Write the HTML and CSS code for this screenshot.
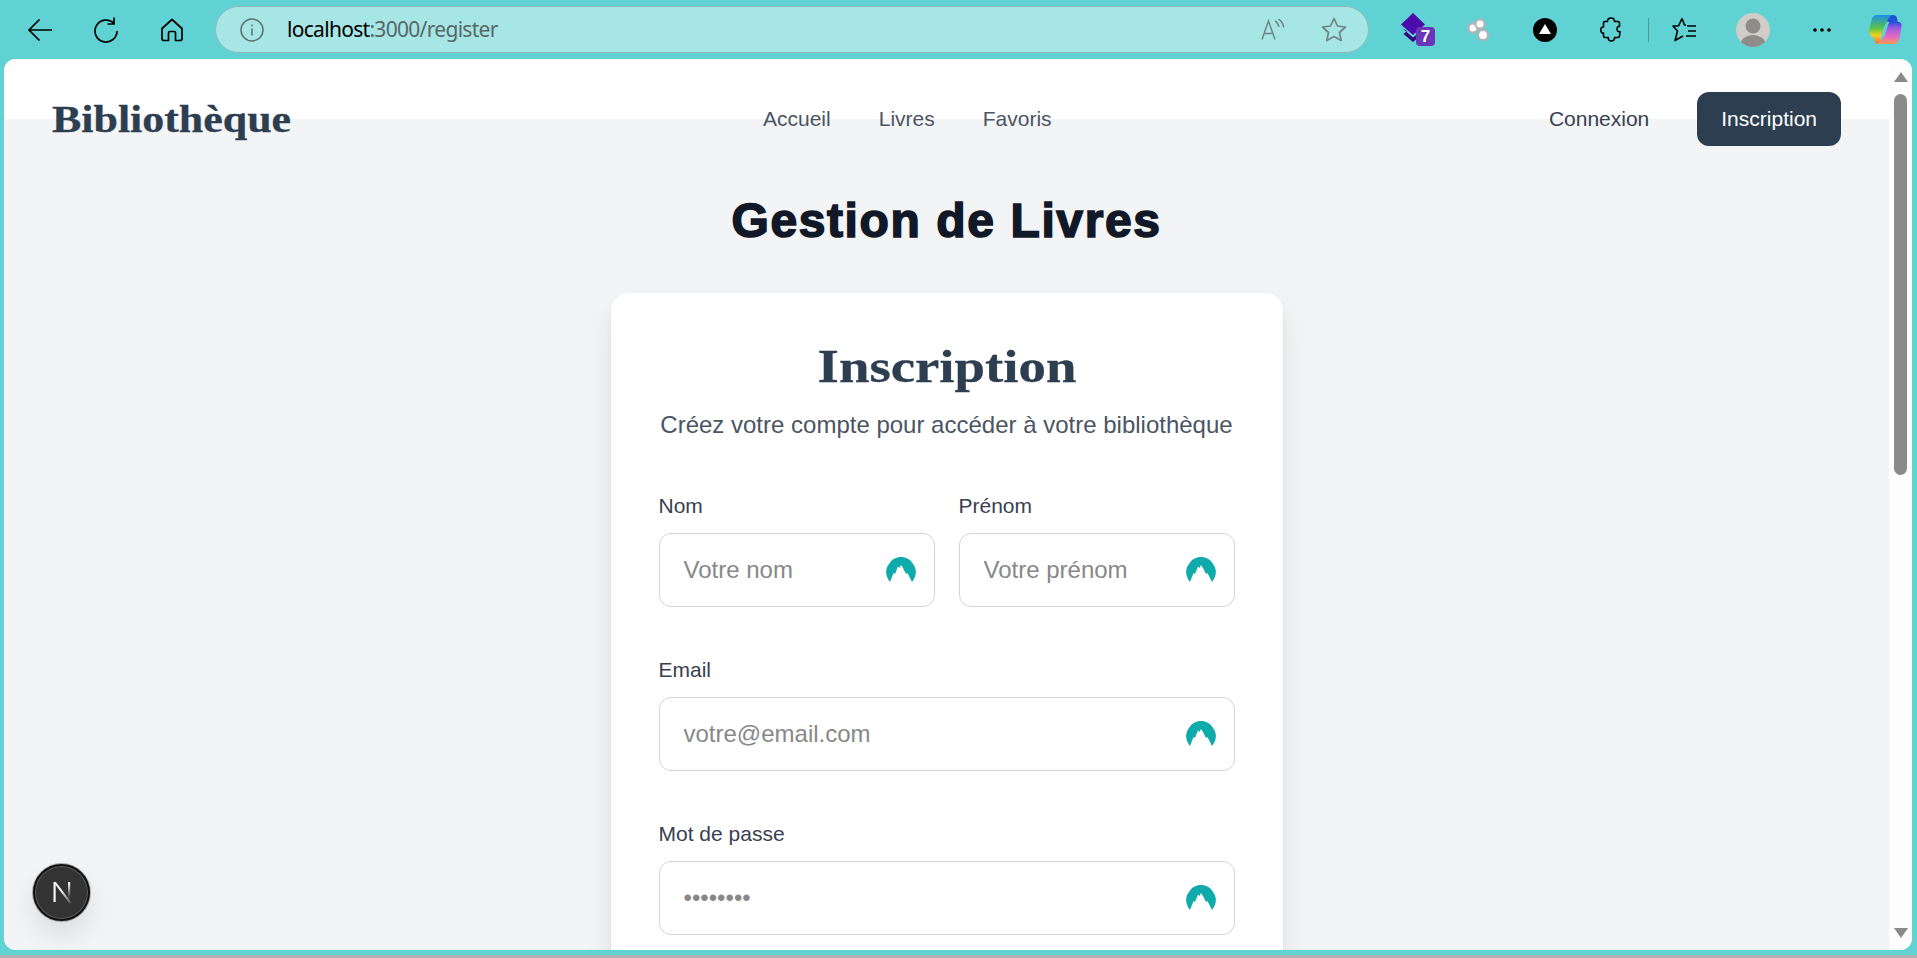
FILE: index.html
```html
<!DOCTYPE html>
<html lang="fr">
<head>
<meta charset="utf-8">
<title>Bibliothèque</title>
<link rel="stylesheet" href="styles.css">
</head>
<body>
<svg class="defs" width="0" height="0" aria-hidden="true">
  <symbol id="peak" viewBox="0 0 30 25">
    <path d="M4 25C-1 19-1 12 3 7 6 2 10 0 15 0s9 2 12 7c4 5 4 12-1 18l-4.500-9-1.500 1-3-6-2-3-1.500 3-1.500-1.500-3 7.500-1.500-1Z" fill="#0fabaa"/>
  </symbol>
</svg>
<header class="toolbar">
  <button class="tb-btn" aria-label="Retour"><svg width="26" height="24" viewBox="0 0 26 24" fill="none" stroke="#000" stroke-width="1.700"><path d="M25 12H2M12.500 1.500 2 12l10.500 10.500"/></svg></button>
  <button class="tb-btn" aria-label="Actualiser"><svg width="26" height="27" viewBox="0 0 26 27" fill="none" stroke="#000" stroke-width="1.700"><path d="M21 7.500A11 11 0 1 0 24 15M21 1.500v6.500h-6.500"/></svg></button>
  <button class="tb-btn" aria-label="Accueil"><svg width="24" height="24" viewBox="0 0 24 24" fill="none" stroke="#000" stroke-width="1.700" stroke-linejoin="round"><path d="M12 1.500 22 10.500V20.500A2 2 0 0 1 20 22.500H15.500V15A1.500 1.500 0 0 0 14 13.500H10A1.500 1.500 0 0 0 8.500 15V22.500H4A2 2 0 0 1 2 20.500V10.500Z"/></svg></button>
  <div class="addr">
    <svg class="addr-info" width="24" height="24" viewBox="0 0 24 24" fill="none" stroke="#5f7070" stroke-width="1.500"><circle cx="12" cy="12" r="11"/><path d="M12 10.500v7M12 6.500v1.800"/></svg>
    <span class="url"><span class="url-host">localhost</span>:3000/register</span>
    <svg class="addr-read" width="24" height="21" viewBox="0 0 24 21" fill="none" stroke="#6f8585" stroke-width="1.500"><path d="M1 20.500 7.500 2 14 20.500M3.200 14.500h8.600M14 2c2.200 1.200 3.500 3.500 3.800 6M17.500 0c2.800 1.800 4.800 4.800 5.200 8.500"/></svg>
    <svg class="addr-star" width="26" height="25" viewBox="0 0 26 25" fill="none" stroke="#6f8585" stroke-width="1.700" stroke-linejoin="round"><path d="M13 1.500 16.500 9l8 1-6 5.500 1.700 8-7.200-4-7.200 4 1.700-8-6-5.500 8-1Z"/></svg>
  </div>
  <svg class="ext ext-stack" width="34" height="33" viewBox="0 0 34 33">
    <path d="M1 15 12 24.500 19 19V23L12 29 2.500 21 6 18Z" fill="#34087f"/>
    <path d="M0 11.500 12 0 24 11.500 12 22Z" fill="#4a0cad"/>
    <rect x="15" y="14" width="19" height="19" rx="4" fill="#6a35b8"/>
    <text x="24.500" y="29" class="ext-count">7</text>
  </svg>
  <svg class="ext ext-dots" width="23" height="23" viewBox="0 0 23 23" fill="#fff" stroke="#b3b3b3" stroke-width="2.200"><circle cx="6" cy="10" r="4.600"/><circle cx="13" cy="6" r="4.600"/><circle cx="16" cy="17" r="5"/></svg>
  <svg class="ext ext-black" width="24" height="24" viewBox="0 0 24 24"><circle cx="12" cy="12" r="12"/><path d="M12 6 18 16H6Z" fill="#fff"/></svg>
  <svg class="ext ext-puzzle" width="22" height="25" viewBox="0 0 22 25" fill="none" stroke="#000" stroke-width="1.600" stroke-linejoin="round"><path d="M11 1c2.200 0 3.500 1.300 3.500 3.500H18c.800 0 1.500.700 1.500 1.500v3.500c-1-.300-2.500 0-2.500 2.500s1.500 3 3 2.500L19.500 19c0 .800-.700 1.500-1.500 1.500h-3.500c.300 2.500-1.500 3.500-3.200 3.500s-3.300-1-3-3.500H5c-.800 0-1.500-.700-1.500-1.500v-3C1.500 16.300.800 14.500.800 13s.700-3.300 2.700-3V6c0-.800.700-1.500 1.500-1.500h2.500C7.500 2.300 8.800 1 11 1Z"/></svg>
  <span class="tb-sep"></span>
  <svg class="ext ext-fav" width="25" height="25" viewBox="0 0 25 25" fill="none" stroke="#000" stroke-width="1.600" stroke-linejoin="round"><path d="M10 1.500 12.500 8H14M6.500 9H1l4.500 5L3 23.500l8-4.500M6.500 9 10 1.500M15 9h9M16 14h8M14 19h10"/></svg>
  <svg class="ext ext-avatar" width="34" height="34" viewBox="0 0 34 34"><defs><clipPath id="av"><circle cx="17" cy="17" r="17"/></clipPath></defs><circle cx="17" cy="17" r="17" fill="#d0cdc8"/><g clip-path="url(#av)" fill="#8e8c88"><circle cx="17" cy="13" r="7.500"/><ellipse cx="17" cy="31" rx="12.500" ry="9"/></g></svg>
  <svg class="ext ext-more" width="18" height="4" viewBox="0 0 18 4"><circle cx="2" cy="2" r="1.800"/><circle cx="9" cy="2" r="1.800"/><circle cx="16" cy="2" r="1.800"/></svg>
  <svg class="ext ext-copilot" width="33" height="31" viewBox="0 0 33 31">
    <defs>
      <linearGradient id="cl" x1="0" y1="0" x2="0" y2="1"><stop offset="0" stop-color="#1b8fe8"/><stop offset=".45" stop-color="#5cc24a"/><stop offset=".7" stop-color="#f0d21c"/><stop offset="1" stop-color="#f26a3c"/></linearGradient>
      <linearGradient id="cr" x1="0" y1="0" x2="0" y2="1"><stop offset="0" stop-color="#2450d8"/><stop offset=".3" stop-color="#a45be0"/><stop offset=".7" stop-color="#e86cc0"/><stop offset="1" stop-color="#fb9a4a"/></linearGradient>
    </defs>
    <path d="M8 1h16l-4 5c-3 3-5 6-6 10l-3 11c-.500 2-2 3-4 3L4 23C0 21-.500 18 .500 14L3 5c.600-2.500 2.500-4 5-4Z" fill="url(#cl)"/>
    <path d="M24 1c2 0 3.500 1 4 3l1 5h-8l-3-2 2-3c1-2 2-3 4-3Z" fill="#2450d8"/>
    <path d="M22 8h7c3 0 4 2 3.500 5l-2 11c-1 4-3 6-6 6H8l5-5c2-2 3-4 4-7l2-7c.500-2 1.500-3 3-3Z" fill="url(#cr)"/>
  </svg>
</header>

<div class="window">
  <div class="page">
    <nav class="nav">
      <a class="logo">Bibliothèque</a>
      <div class="nav-links">
        <a class="nav-link">Accueil</a>
        <a class="nav-link">Livres</a>
        <a class="nav-link">Favoris</a>
      </div>
      <div class="nav-actions">
        <a class="nav-action">Connexion</a>
        <a class="nav-cta">Inscription</a>
      </div>
    </nav>
    <main class="main">
      <h1 class="title">Gestion de Livres</h1>
      <section class="card">
        <h2 class="card-title">Inscription</h2>
        <p class="card-sub">Créez votre compte pour accéder à votre bibliothèque</p>
        <form class="form">
          <div class="row">
            <div class="field">
              <label class="label">Nom</label>
              <div class="control"><input class="input" type="text" placeholder="Votre nom"><svg class="peak"><use href="#peak"/></svg></div>
            </div>
            <div class="field">
              <label class="label">Prénom</label>
              <div class="control"><input class="input" type="text" placeholder="Votre prénom"><svg class="peak"><use href="#peak"/></svg></div>
            </div>
          </div>
          <div class="field">
            <label class="label">Email</label>
            <div class="control"><input class="input" type="email" placeholder="votre@email.com"><svg class="peak"><use href="#peak"/></svg></div>
          </div>
          <div class="field">
            <label class="label">Mot de passe</label>
            <div class="control"><input class="input" type="password" placeholder="••••••••"><svg class="peak"><use href="#peak"/></svg></div>
          </div>
        </form>
      </section>
    </main>
    <button class="next-badge" aria-label="Next.js">
      <svg width="30" height="30" viewBox="0 0 30 30" fill="none">
        <defs>
          <linearGradient id="nd" x1="0" y1="0" x2="1" y2="1"><stop offset=".4" stop-color="#fff"/><stop offset="1" stop-color="#fff" stop-opacity=".1"/></linearGradient>
          <linearGradient id="nr" x1="0" y1="0" x2="0" y2="1"><stop offset="0" stop-color="#fff"/><stop offset=".9" stop-color="#fff" stop-opacity=".1"/></linearGradient>
        </defs>
        <rect x="6.500" y="4" width="2.200" height="20" fill="#f2f2f2"/>
        <path d="M6.500 4 8.800 4 24.500 24.500 22.700 25.800Z" fill="url(#nd)"/>
        <rect x="21" y="4" width="2.200" height="16" fill="url(#nr)"/>
      </svg>
    </button>
  </div>
  <div class="scrollbar">
    <span class="arrow-up"></span>
    <span class="thumb"></span>
    <span class="arrow-down"></span>
  </div>
</div>
<div class="taskbar-edge"></div>
</body>
</html>
```
FILE: styles.css
```css
* { box-sizing: border-box; }
html, body { margin: 0; height: 958px; overflow: hidden; }
body {
  display: flex;
  flex-direction: column;
  background: #61d2d3;
  font-family: "Liberation Sans", Arial, sans-serif;
}
.defs { position: absolute; }

/* browser toolbar */
.toolbar {
  flex: none;
  height: 59px;
  display: flex;
  align-items: center;
  padding-left: 7px;
}
.tb-btn {
  width: 66px;
  height: 46px;
  padding: 0;
  border: 0;
  background: none;
  display: flex;
  align-items: center;
  justify-content: center;
}
.addr {
  width: 1154px;
  height: 47px;
  margin-left: 10px;
  display: flex;
  align-items: center;
  background: #a6e6e4;
  border: 1.5px solid #8fb9b9;
  border-radius: 24px;
  padding-left: 24px;
}
.url {
  margin-left: 23px;
  padding-bottom: 2px;
  font: 21px "Noto Sans", "Open Sans", sans-serif;
  letter-spacing: -0.7px;
  color: #566868;
}
.url-host { color: #000; }
.addr-read { margin-left: auto; }
.addr-star { margin-left: 36px; margin-right: 21px; }
.ext { flex: none; }
.ext-count { font: bold 17px "Liberation Sans", sans-serif; fill: #fff; text-anchor: middle; }
.ext-stack { margin-left: 32px; }
.ext-dots { margin-left: 32px; }
.ext-black { margin-left: 43px; }
.ext-puzzle { margin-left: 43px; }
.tb-sep { flex: none; width: 1px; height: 24px; margin-left: 26px; background: #4f9999; }
.ext-fav { margin-left: 23px; }
.ext-avatar { margin-left: 39px; }
.ext-more { margin-left: 43px; }
.ext-copilot { margin-left: 38px; }

/* browser window */
.window {
  flex: none;
  width: 1908px;
  height: 891px;
  margin-left: 4px;
  display: flex;
  border-radius: 12px;
  overflow: hidden;
  background: #fff;
}
.taskbar-edge { flex: none; height: 3px; margin-top: 5px; background: #b0b0b0; }
.page {
  position: relative;
  flex: 1;
  min-width: 0;
  overflow: hidden;
  background: #f3f4f6;
}
.scrollbar {
  flex: none;
  width: 23px;
  padding: 13px 4px 12px;
  display: flex;
  flex-direction: column;
  align-items: center;
  background: #fdfdfd;
}
.arrow-up, .arrow-down {
  flex: none;
  width: 0;
  height: 0;
  border-left: 7.5px solid transparent;
  border-right: 7.5px solid transparent;
}
.arrow-up { border-bottom: 10px solid #8a8a8a; }
.arrow-down { border-top: 10px solid #8a8a8a; margin-top: auto; }
.thumb { flex: none; width: 13px; height: 381px; margin-top: 12px; border-radius: 7px; background: #8a8a8a; }

/* nav */
.nav {
  height: 120px;
  padding: 0 48px;
  display: flex;
  align-items: center;
  background: linear-gradient(#fff 60px, transparent 60px);
}
.logo {
  width: 239px;
  white-space: nowrap;
  font: bold 38px "Liberation Serif", serif;
  color: #2c3e50;
  -webkit-text-stroke: 0.3px #2c3e50;
  transform: scaleX(1.155);
  transform-origin: left center;
}
.nav-links { margin-left: 472px; display: flex; gap: 48px; }
.nav-link { font-size: 21px; color: #4b5563; }
.nav-actions { margin-left: auto; display: flex; align-items: center; gap: 48px; }
.nav-action { font-size: 21px; color: #374151; }
.nav-cta {
  height: 54px;
  padding: 0 24px;
  display: flex;
  align-items: center;
  font-size: 21px;
  color: #fff;
  background: #2c3e50;
  border-radius: 12px;
}

/* content */
.main { display: flex; flex-direction: column; align-items: center; }
.title {
  margin: 15px 0 45px;
  font-size: 48px;
  line-height: 54px;
  font-weight: 700;
  letter-spacing: 1.6px;
  color: #111827;
  -webkit-text-stroke: 1.6px #111827;
}
.card {
  width: 672px;
  padding: 48px;
  background: #fff;
  border-radius: 18px;
  box-shadow: 0 15px 30px -3px rgba(0, 0, 0, 0.1), 0 6px 10px -4px rgba(0, 0, 0, 0.1);
}
.card-title {
  margin: 0 0 16px;
  text-align: center;
  font: bold 47px/50px "Liberation Serif", serif;
  color: #2c3e50;
  -webkit-text-stroke: 0.3px #2c3e50;
  transform: scaleX(1.166);
}
.card-sub {
  margin: 0 0 48px;
  text-align: center;
  font-size: 24px;
  line-height: 36px;
  color: #4b5563;
}
.form { display: flex; flex-direction: column; gap: 48px; }
.row { display: grid; grid-template-columns: 1fr 1fr; gap: 24px; }
.field { display: flex; flex-direction: column; gap: 12px; }
.label { font-size: 21px; line-height: 30px; color: #374151; }
.control { position: relative; }
.input {
  display: block;
  width: 100%;
  height: 74px;
  padding: 0 24px;
  border: 1.5px solid #d1d5db;
  border-radius: 12px;
  background: #fff;
  font: 24px "Liberation Sans", Arial, sans-serif;
  outline: none;
}
.input::placeholder { color: #888; opacity: 1; }
.peak { position: absolute; right: 19px; top: 24px; width: 30px; height: 25px; }

/* Next.js dev badge */
.next-badge {
  position: absolute;
  left: 29px;
  bottom: 29px;
  width: 57px;
  height: 57px;
  padding: 0;
  display: flex;
  align-items: center;
  justify-content: center;
  border-radius: 50%;
  border: 2px solid #111;
  background: #333;
  box-shadow: inset 0 0 0 1px rgba(255, 255, 255, 0.2), 0 0 0 1px rgba(120, 120, 120, 0.6), 0 14px 28px rgba(0, 0, 0, 0.1);
}
```
